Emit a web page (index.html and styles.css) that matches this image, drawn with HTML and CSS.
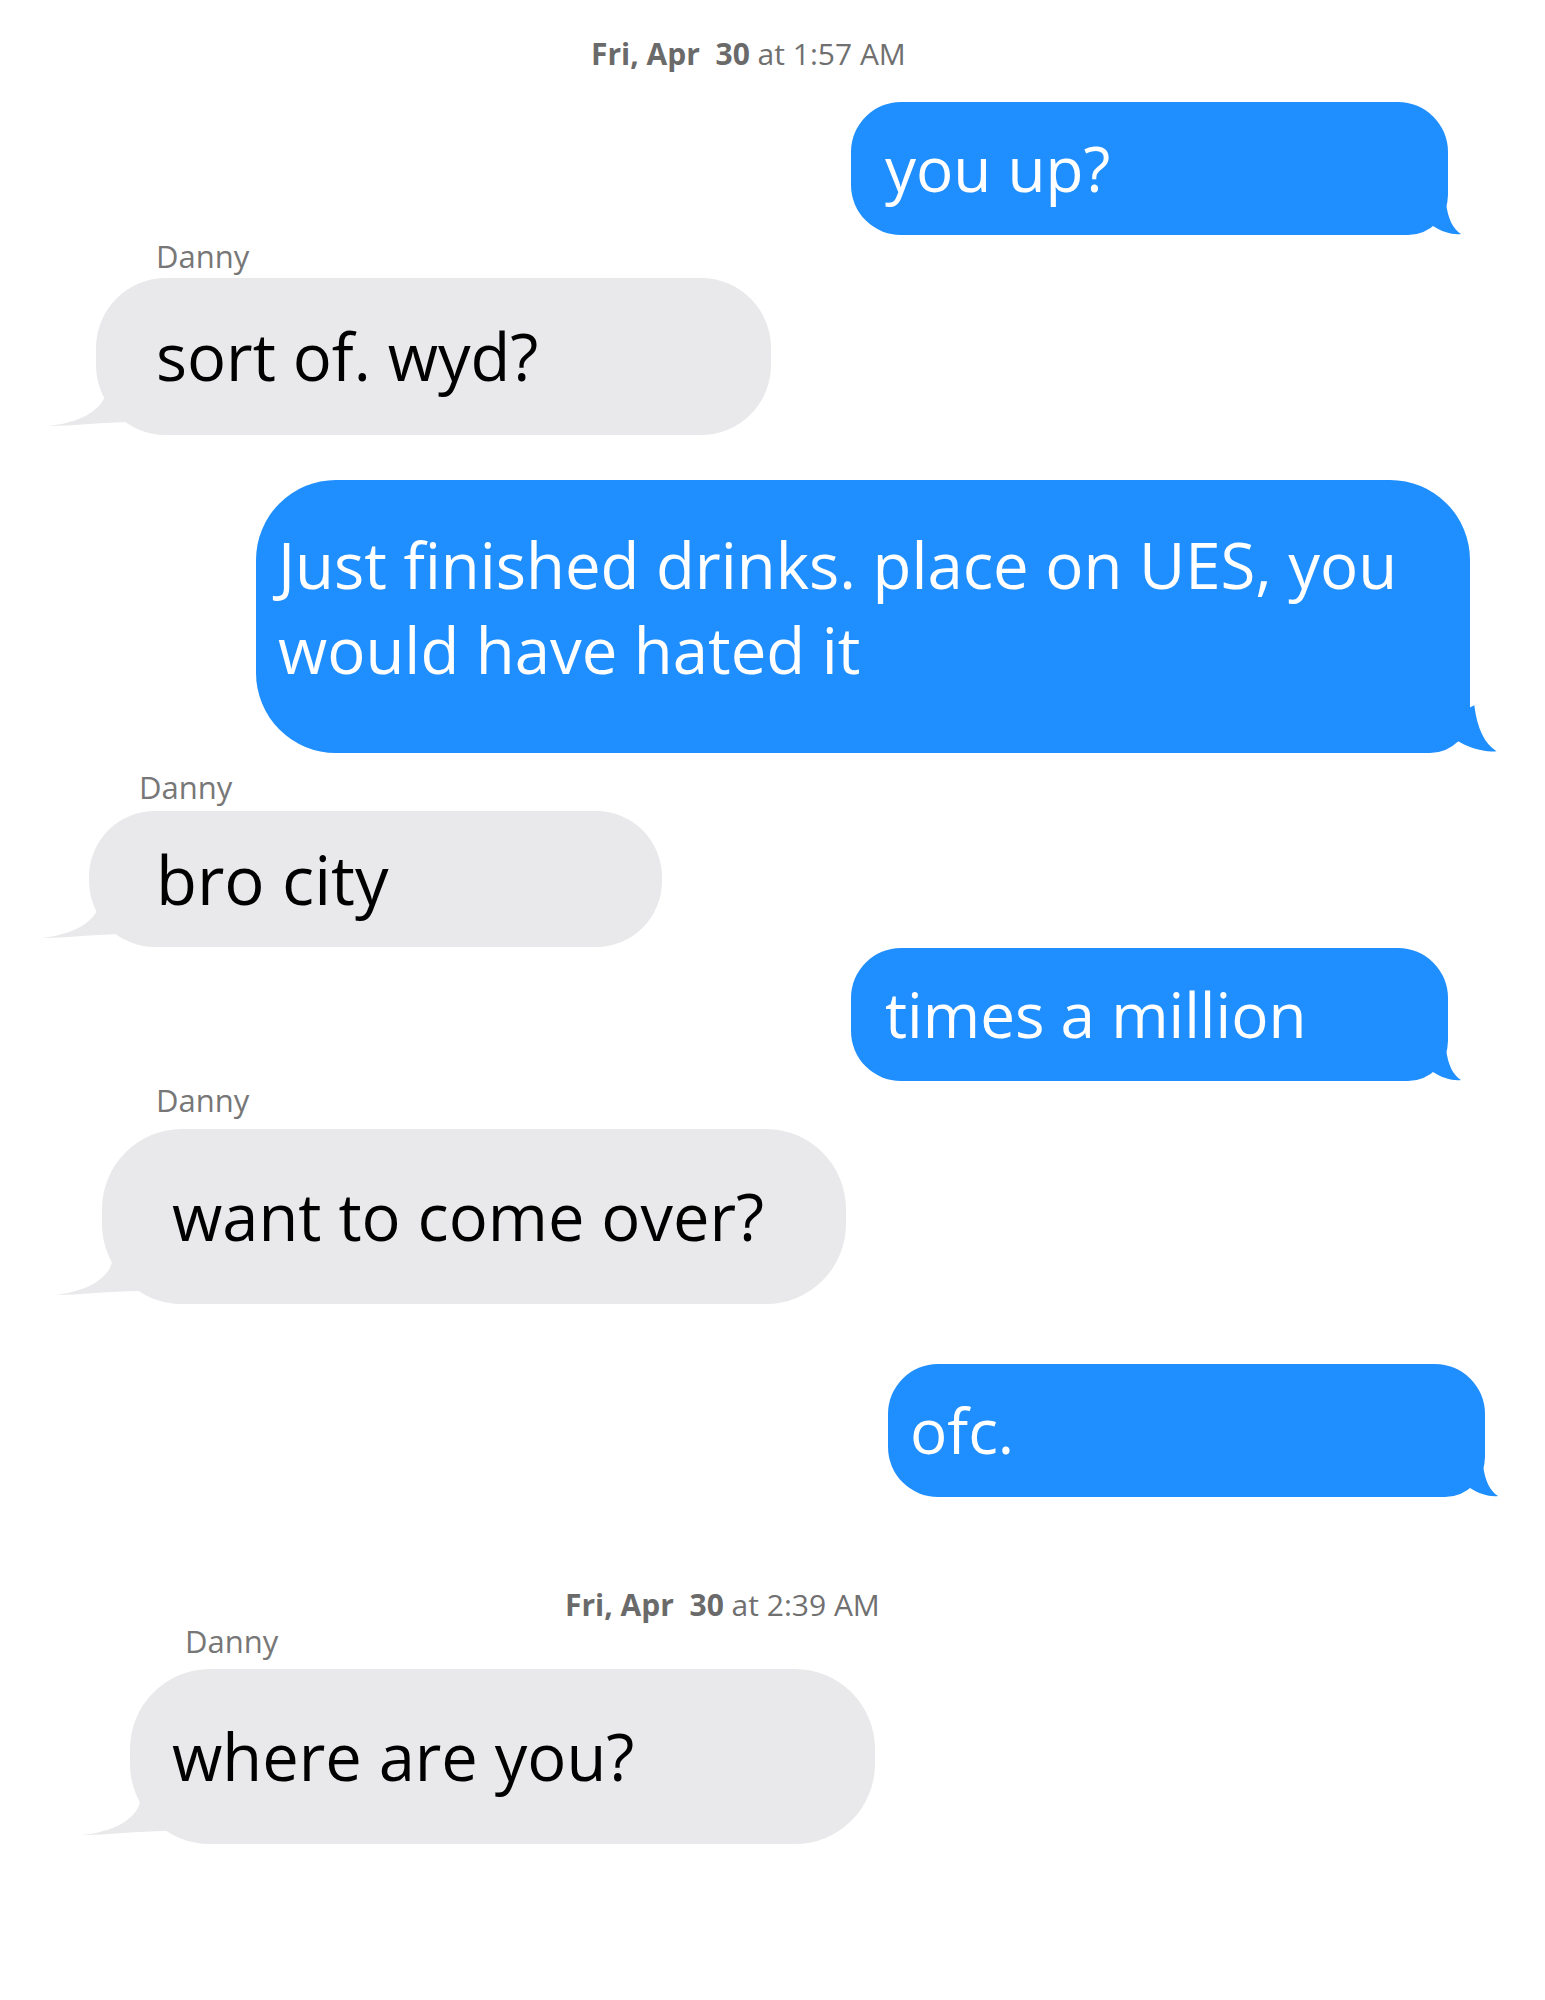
FILE: index.html
```html
<!DOCTYPE html>
<html lang="en">
<head>
    <meta charset="UTF-8">
    <meta name="viewport" content="width=device-width, initial-scale=1.0">
    <title>Danny</title>
    <link rel="stylesheet" href="styles.css">
</head>
<body>
    <main class="thread">
        <p class="stamp s1"><b>Fri, Apr&nbsp; 30</b> at 1:57 AM</p>

        <div class="bubble sent m1">
            <span>you up?</span>
            <svg class="tail" viewBox="0 0 54 40"><path d="M38,8 C40,24 45,34 53,39 C45,40 34,37 25,31 L18,18 Z"/></svg>
        </div>

        <p class="name n1">Danny</p>
        <div class="bubble got m2">
            <span>sort of. wyd?</span>
            <svg class="tail" viewBox="0 0 100 50"><path d="M60,8 C56,26 32,38 2,41 C28,41 58,37 86,37 L100,20 Z"/></svg>
        </div>

        <div class="bubble sent m3">
            <span>Just finished drinks. place on UES, you would have hated it</span>
            <svg class="tail" viewBox="0 0 54 40"><path d="M38,8 C40,24 45,34 53,39 C45,40 34,37 25,31 L18,18 Z"/></svg>
        </div>

        <p class="name n2">Danny</p>
        <div class="bubble got m4">
            <span>bro city</span>
            <svg class="tail" viewBox="0 0 100 50"><path d="M60,8 C56,26 32,38 2,41 C28,41 58,37 86,37 L100,20 Z"/></svg>
        </div>

        <div class="bubble sent m5">
            <span>times a million</span>
            <svg class="tail" viewBox="0 0 54 40"><path d="M38,8 C40,24 45,34 53,39 C45,40 34,37 25,31 L18,18 Z"/></svg>
        </div>

        <p class="name n3">Danny</p>
        <div class="bubble got m6">
            <span>want to come over?</span>
            <svg class="tail" viewBox="0 0 100 50"><path d="M60,8 C56,26 32,38 2,41 C28,41 58,37 86,37 L100,20 Z"/></svg>
        </div>

        <div class="bubble sent m7">
            <span>ofc.</span>
            <svg class="tail" viewBox="0 0 54 40"><path d="M38,8 C40,24 45,34 53,39 C45,40 34,37 25,31 L18,18 Z"/></svg>
        </div>

        <p class="stamp s2"><b>Fri, Apr&nbsp; 30</b> at 2:39 AM</p>
        <p class="name n4">Danny</p>
        <div class="bubble got m8">
            <span>where are you?</span>
            <svg class="tail" viewBox="0 0 100 50"><path d="M60,8 C56,26 32,38 2,41 C28,41 58,37 86,37 L100,20 Z"/></svg>
        </div>
    </main>
</body>
</html>
```

FILE: styles.css
```css
* {
    box-sizing: border-box;
    margin: 0;
    padding: 0;
}

body {
    font-family: "Open Sans", "Noto Sans", sans-serif;
    background: #fff;
}

.thread {
    display: flex;
    flex-direction: column;
    align-items: flex-start;
    padding-bottom: 150px;
}

/* timestamps and sender names */
.stamp {
    font-size: 30px;
    line-height: 36px;
    color: #707070;
}

.stamp b {
    font-weight: 700;
    color: #6a6a6a;
}

.s1 { margin: 36px 0 0 591px; }
.s2 { margin: 90px 0 0 565px; }

.name {
    font-size: 31px;
    line-height: 36px;
    color: #777;
}

.n1 { margin: 3px 0 0 156px; }
.n2 { margin: 16px 0 0 139px; }
.n3 { margin: 1px 0 0 156px; }
.n4 { margin: 0 0 0 185px; }

/* bubbles */
.bubble {
    position: relative;
    display: flex;
    align-items: center;
    font-size: 62px;
    line-height: 85px;
}

.sent {
    background: #1f8efe;
    color: #fff;
    border-radius: 50px 50px 40px 50px;
}

.got {
    background: #e9e9eb;
    color: #000;
    border-radius: 70px;
    font-size: 65px;
}

.tail {
    position: absolute;
    bottom: 0;
}

.sent .tail {
    right: -14px;
    width: 54px;
    height: 40px;
    fill: #1f8efe;
}

.got .tail {
    left: -50px;
    width: 100px;
    height: 50px;
    fill: #e9e9eb;
}

.m1 { margin: 30px 0 0 851px; width: 597px; height: 133px; padding-left: 34px; }
.m2 { margin: 4px 0 0 96px; width: 675px; height: 157px; padding-left: 60px; }
.m3 { margin: 45px 0 0 256px; width: 1214px; height: 273px; padding: 0 20px 20px 22px; border-radius: 80px 80px 40px 80px; font-size: 63.5px; }
.m4 { margin: 6px 0 0 89px; width: 573px; height: 136px; padding-left: 67px; border-radius: 66px; font-size: 67px; }
.m5 { margin: 1px 0 0 851px; width: 597px; height: 133px; padding-left: 34px; }
.m6 { margin: 11px 0 0 102px; width: 744px; height: 175px; padding-left: 70px; border-radius: 80px; }
.m7 { margin: 60px 0 0 888px; width: 597px; height: 133px; padding-left: 22px; }
.m8 { margin: 10px 0 0 130px; width: 745px; height: 175px; padding-left: 42px; border-radius: 80px; }

.m3 .tail {
    right: -28px;
    width: 80px;
    height: 60px;
}
```
